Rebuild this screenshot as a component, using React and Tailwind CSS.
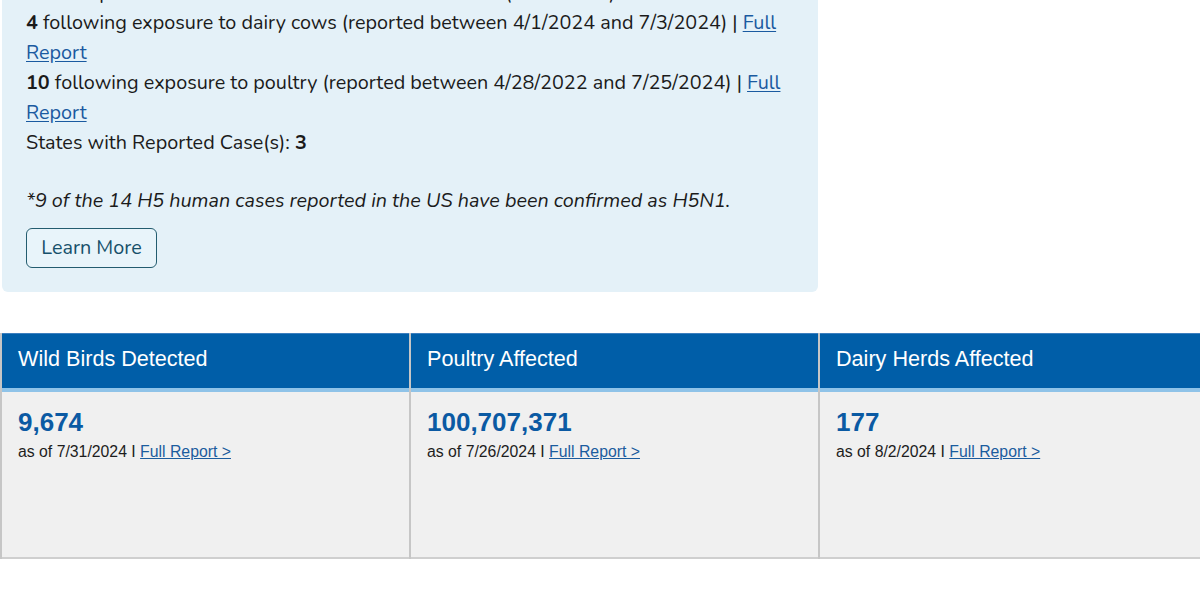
import React from "react";

function Card({ title, value, date }) {
  return (
    <div className="flex flex-col w-[409px] shrink-0 border-l-2 border-[#c6c6c6]">
      <div className="h-[55px] bg-[#005ea8] border-t border-[#3c7fbf] flex items-center pb-[4px] pl-[16px] text-white text-[21.6px] leading-none">
        {title}
      </div>
      <div className="h-[4px] bg-[#8fc3e8]" />
      <div className="h-[167px] bg-[#f0f0f0] border-b-2 border-[#cfcfcf] pl-[16px] pt-[16px]">
        <div className="text-[26px] font-bold text-[#0b5aa3] leading-[28px]">{value}</div>
        <div className="text-[15.8px] text-[#1d1d1d] mt-[5px] leading-[22px]">
          as of {date} I{" "}
          <a href="#" className="text-[#1b5c9e] underline">Full Report &gt;</a>
        </div>
      </div>
    </div>
  );
}

export default function App() {
  const link = "text-[#1a5aa0] underline underline-offset-2";
  return (
    <div className="w-[1200px] h-[600px] overflow-hidden bg-white">
      <div
        className="ml-[2px] w-[816px] -mt-[30px] pt-[8px] pb-[24px] pl-[24px] pr-[20px] bg-[#e4f1f8] rounded-b-md text-[19.8px] leading-[30px] text-[#1b1b1b]"
        style={{ fontFamily: '"Nunito", "Open Sans", "Noto Sans", sans-serif' }}
      >
        <div>Total Reported Human Cases in the United States: 14 (since 2022)</div>
        <div>
          <span className="font-bold">4</span> following exposure to dairy cows (reported between 4/1/2024 and 7/3/2024) |{" "}
          <a href="#" className={link}>Full<br />Report</a>
        </div>
        <div>
          <span className="font-bold">10</span> following exposure to poultry (reported between 4/28/2022 and 7/25/2024) |{" "}
          <a href="#" className={link}>Full<br />Report</a>
        </div>
        <div>
          States with Reported Case(s): <span className="font-bold">3</span>
        </div>
        <div className="mt-[28px] italic">
          *9 of the 14 H5 human cases reported in the US have been confirmed as H5N1.
        </div>
        <button className="mt-[12px] h-[40px] w-[131px] rounded-[6px] border border-[#235c6f] bg-[#e8f4fa] text-[#16506a] text-[19.8px] leading-none">
          Learn More
        </button>
      </div>
      <div
        className="flex mt-[41px]"
        style={{ fontFamily: '"Liberation Sans", Arial, sans-serif' }}
      >
        <Card title="Wild Birds Detected" value="9,674" date="7/31/2024" />
        <Card title="Poultry Affected" value="100,707,371" date="7/26/2024" />
        <Card title="Dairy Herds Affected" value="177" date="8/2/2024" />
      </div>
    </div>
  );
}
